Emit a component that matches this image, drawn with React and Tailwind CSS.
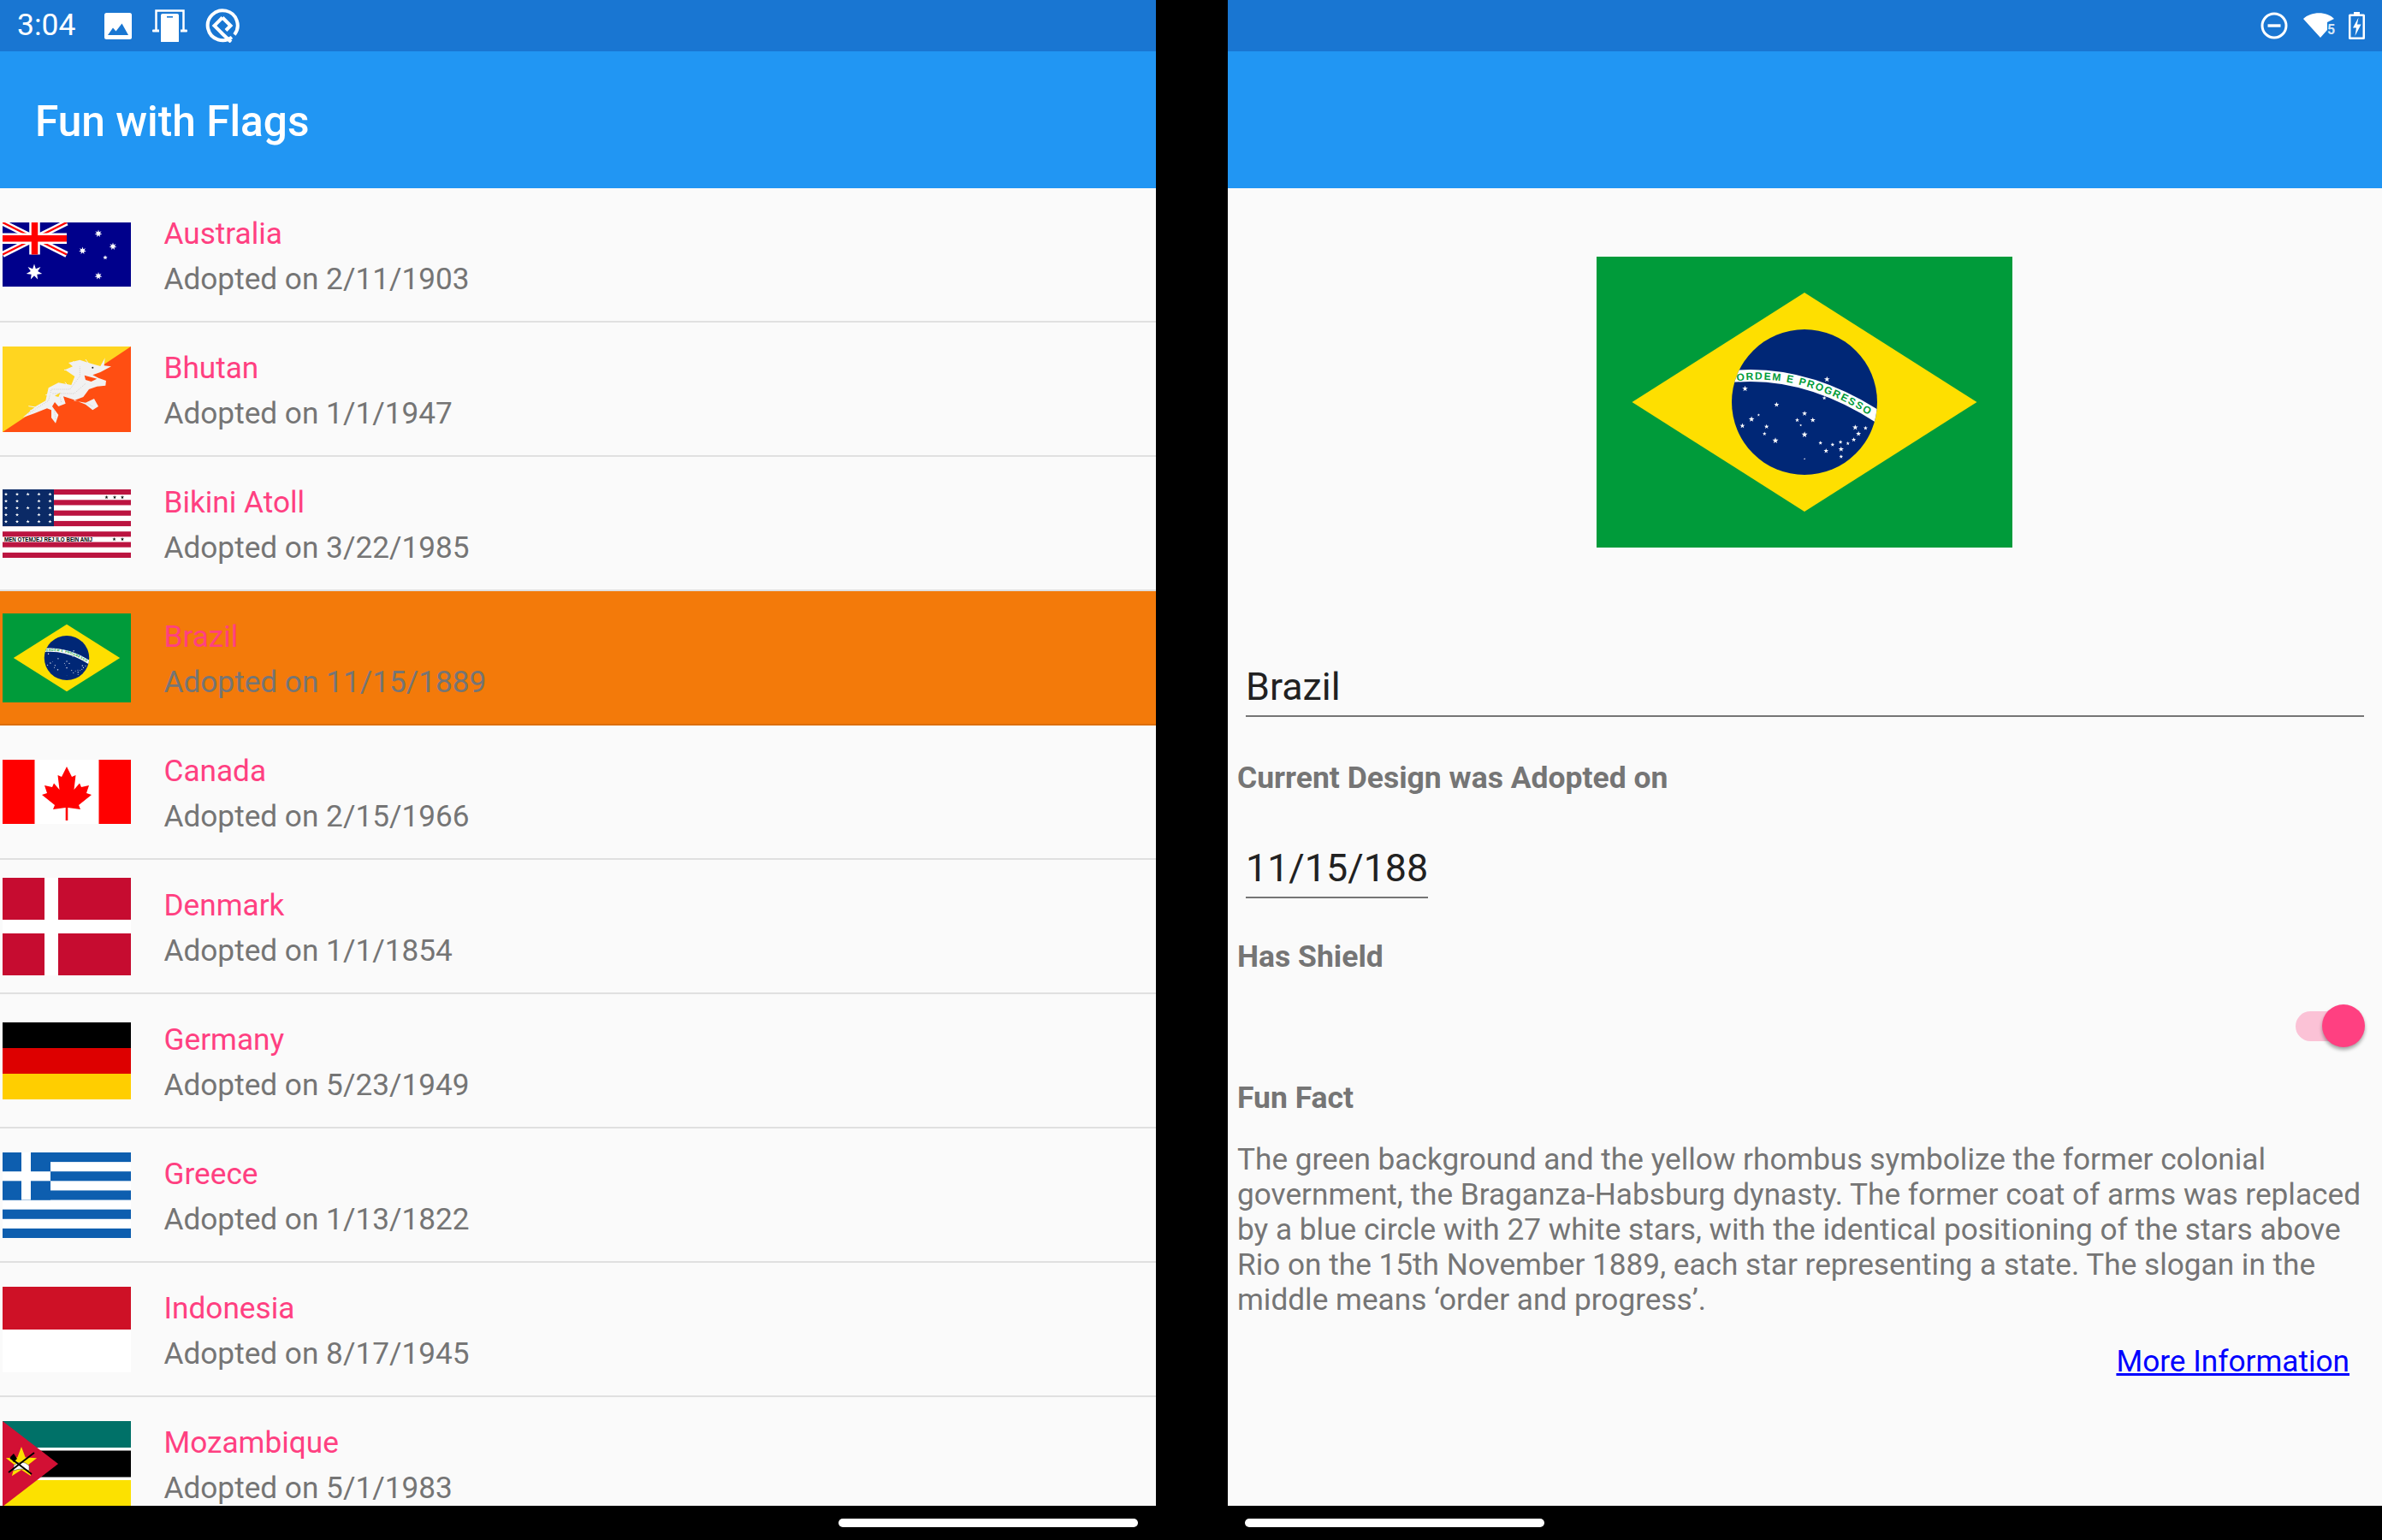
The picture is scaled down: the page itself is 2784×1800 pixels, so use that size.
import React from "react";

const countries = [
  { name: "Australia", date: "2/11/1903", Flag: AustraliaFlag, h: "h-[75px]" },
  { name: "Bhutan", date: "1/1/1947", Flag: BhutanFlag, h: "h-[100px]" },
  { name: "Bikini Atoll", date: "3/22/1985", Flag: BikiniFlag, h: "h-[80px]" },
  { name: "Brazil", date: "11/15/1889", Flag: BrazilFlag, h: "h-[104px]", selected: true },
  { name: "Canada", date: "2/15/1966", Flag: CanadaFlag, h: "h-[75px]" },
  { name: "Denmark", date: "1/1/1854", Flag: DenmarkFlag, h: "h-[114px]" },
  { name: "Germany", date: "5/23/1949", Flag: GermanyFlag, h: "h-[90px]" },
  { name: "Greece", date: "1/13/1822", Flag: GreeceFlag, h: "h-[100px]" },
  { name: "Indonesia", date: "8/17/1945", Flag: IndonesiaFlag, h: "h-[100px]" },
  { name: "Mozambique", date: "5/1/1983", Flag: MozambiqueFlag, h: "h-[100px]" },
];

// n-point star as polygon points
function starPoints(cx, cy, r, n = 5, inner = 0.4) {
  const pts = [];
  for (let i = 0; i < n * 2; i++) {
    const rad = i % 2 === 0 ? r : r * inner;
    const a = (Math.PI * i) / n - Math.PI / 2;
    pts.push(`${(cx + rad * Math.cos(a)).toFixed(2)},${(cy + rad * Math.sin(a)).toFixed(2)}`);
  }
  return pts.join(" ");
}

function FlagSvg({ w, h, children }) {
  return (
    <svg viewBox={`0 0 ${w} ${h}`} preserveAspectRatio="none" className="block w-full h-full">
      {children}
    </svg>
  );
}

function AustraliaFlag() {
  const stars = [
    [112, 13, 4.5, 7],
    [129, 28, 4.5, 7],
    [93.5, 33, 4.5, 7],
    [120, 41, 2.8, 5],
    [112, 62.5, 4.5, 7],
    [37, 58, 9.5, 7],
  ];
  return (
    <FlagSvg w={150} h={75}>
      <rect width="150" height="75" fill="#00008b" />
      <path d="M0 0L75 37.5M75 0L0 37.5" stroke="#fff" strokeWidth="7" />
      <path d="M0 0L75 37.5M75 0L0 37.5" stroke="#f00" strokeWidth="2.4" />
      <path d="M37.5 0V37.5M0 18.75H75" stroke="#fff" strokeWidth="12.5" />
      <path d="M37.5 0V37.5M0 18.75H75" stroke="#f00" strokeWidth="7.5" />
      {stars.map(([x, y, r, n]) => (
        <polygon key={`${x}-${y}`} points={starPoints(x, y, r, n, 0.45)} fill="#fff" />
      ))}
    </FlagSvg>
  );
}

function BhutanFlag() {
  return (
    <FlagSvg w={150} h={100}>
      <rect width="150" height="100" fill="#ffd520" />
      <polygon points="150,0 150,100 0,100" fill="#ff4e12" />
      <g transform="translate(-3,-5) scale(0.3333)">
        <polygon
          fill="#f1f1f1"
          points="80,264 125,225 160,205 170,160 205,142 250,150 262,120 228,97 255,85 240,72 280,62 320,75 352,84 368,55 365,82 390,85 352,105 325,115 345,125 372,135 370,152 340,155 312,165 292,192 258,205 300,212 330,198 345,225 325,238 300,218 255,200 222,190 230,215 205,225 192,210 183,225 205,255 195,284 180,265 180,238 165,232 120,250"
        />
        <polygon fill="#ff4e12" points="296,116 340,128 320,138 300,132" />
        <circle cx="325" cy="89" r="3" fill="#222" />
        <polygon fill="#ffd520" points="192,188 212,176 205,192" />
        <g fill="none" stroke="#bdbdbd" strokeWidth="2" strokeDasharray="3 4">
          <path d="M100 250L170 205L180 165L245 165L280 120L280 85" />
          <path d="M185 180L260 180L300 145" />
          <path d="M215 210L210 190M325 225L300 210M195 270L190 235" />
        </g>
        <g fill="none" stroke="#f1f1f1" strokeWidth="3">
          <path d="M100 224L125 228M105 240L130 232M225 97L262 100M255 68L280 78M300 60L315 80M160 185L180 180M228 140L240 155" />
        </g>
      </g>
    </FlagSvg>
  );
}

function BikiniFlag() {
  const s = 80 / 13;
  const cols = [4, 17, 29.6, 42.5, 55.5];
  const rows = [
    [0, 1, 2, 3, 4],
    [0, 1, 3, 4],
    [0, 1, 2, 3, 4],
    [0, 1, 3, 4],
    [0, 1, 2, 3, 4],
  ];
  return (
    <FlagSvg w={150} h={80}>
      <rect width="150" height="80" fill="#fff" />
      {[0, 2, 4, 6, 8, 10, 12].map((i) => (
        <rect key={i} y={i * s} width="150" height={s} fill="#bb1440" />
      ))}
      <rect width="60" height={7 * s} fill="#0b2a66" />
      {rows.map((row, r) =>
        row.map((c) => <polygon key={`${r}-${c}`} points={starPoints(cols[c], 5.7 + r * 8, 2.2)} fill="#fff" />)
      )}
      {[121.5, 131, 140].map((x) => (
        <polygon key={x} points={starPoints(x, 9.3, 2.2)} fill="#111" />
      ))}
      {[130.5, 140].map((x) => (
        <polygon key={x} points={starPoints(x, 58.3, 2.2)} fill="#111" />
      ))}
      <text x="2" y="60.8" fontSize="6.4" fontWeight="700" fontFamily="Liberation Sans, sans-serif" textLength="103" lengthAdjust="spacingAndGlyphs">
        MEN OTEMJEJ REJ ILO BEIN ANIJ
      </text>
    </FlagSvg>
  );
}

function BrazilFlag() {
  // star positions read off the large flag
  const stars = [
    [857, 490, 9],
    [579, 523, 9],
    [848, 556, 6],
    [686, 579, 8],
    [781, 610, 8],
    [625, 615, 4],
    [601, 630, 9],
    [756, 633, 6.5],
    [809, 633, 8],
    [570, 653, 8],
    [652, 656, 7.5],
    [768, 651, 3.5],
    [953, 659, 9],
    [988, 661, 6.5],
    [964, 681, 8],
    [645, 681, 6],
    [781, 684, 9.5],
    [682, 705, 9.5],
    [948, 702, 7],
    [835, 713, 6],
    [876, 719, 6],
    [903, 710, 6],
    [928, 715, 5.5],
    [905, 735, 8.5],
    [854, 741, 7.5],
    [905, 761, 6],
    [781, 769, 2.5],
  ];
  return (
    <FlagSvg w={486} h={340}>
      <defs>
        <clipPath id="brazilGlobe">
          <circle cx="243" cy="170" r="85" />
        </clipPath>
      </defs>
      <rect width="486" height="340" fill="#009b3a" />
      <polygon points="41.5,170 243,42 444.5,170 243,298" fill="#fedf00" />
      <circle cx="243" cy="170" r="85" fill="#002776" />
      <g clipPath="url(#brazilGlobe)">
        <path d="M150 141Q242 129 335 191" fill="none" stroke="#fff" strokeWidth="14" />
      </g>
      <path id="brazilBand" d="M164 145.5Q242 134 330 193" fill="none" />
      <text fontSize="12" fontWeight="700" fill="#009b3a" fontFamily="Liberation Sans, sans-serif" letterSpacing="1.6">
        <textPath href="#brazilBand">ORDEM E PROGRESSO</textPath>
      </text>
      {stars.map(([x, y, r]) => (
        <polygon key={`${x}-${y}`} points={starPoints((x - 75) / 2.904, (y - 60) / 3, r / 2.904 + 0.4)} fill="#fff" />
      ))}
    </FlagSvg>
  );
}

function CanadaFlag() {
  const half = [
    [6, 20],
    [10.5, 18],
    [8.5, 35],
    [15, 27.5],
    [17, 32],
    [26, 30],
    [23, 39],
    [29, 41],
    [14, 53],
    [16, 58],
    [1.3, 56],
    [1.3, 71],
  ];
  const right = half.map(([dx, y]) => `${75 + dx},${y}`);
  const left = [...half].reverse().map(([dx, y]) => `${75 - dx},${y}`);
  return (
    <FlagSvg w={150} h={75}>
      <rect width="150" height="75" fill="#fff" />
      <rect width="37.5" height="75" fill="#f00" />
      <rect x="112.5" width="37.5" height="75" fill="#f00" />
      <polygon points={["75,8", ...right, ...left].join(" ")} fill="#f00" />
    </FlagSvg>
  );
}

function DenmarkFlag() {
  return (
    <FlagSvg w={150} h={114}>
      <rect width="150" height="114" fill="#c60c30" />
      <rect x="49" width="16" height="114" fill="#fff" />
      <rect y="49" width="150" height="16" fill="#fff" />
    </FlagSvg>
  );
}

function GermanyFlag() {
  return (
    <FlagSvg w={150} h={90}>
      <rect width="150" height="30" fill="#000" />
      <rect y="30" width="150" height="30" fill="#d00" />
      <rect y="60" width="150" height="30" fill="#ffce00" />
    </FlagSvg>
  );
}

function GreeceFlag() {
  const s = 100 / 9;
  return (
    <FlagSvg w={150} h={100}>
      <rect width="150" height="100" fill="#fff" />
      {[0, 2, 4, 6, 8].map((i) => (
        <rect key={i} y={i * s} width="150" height={s} fill="#0d5eaf" />
      ))}
      <rect width="56" height={5 * s} fill="#0d5eaf" />
      <rect x="22" width="11" height={5 * s} fill="#fff" />
      <rect y={2 * s} width="56" height={s} fill="#fff" />
    </FlagSvg>
  );
}

function IndonesiaFlag() {
  return (
    <FlagSvg w={150} h={100}>
      <rect width="150" height="100" fill="#fff" />
      <rect width="150" height="50" fill="#ce1126" />
    </FlagSvg>
  );
}

function MozambiqueFlag() {
  return (
    <FlagSvg w={150} h={100}>
      <rect width="150" height="100" fill="#fff" />
      <rect width="150" height="31" fill="#007168" />
      <rect y="34.5" width="150" height="31" fill="#000" />
      <rect y="69" width="150" height="31" fill="#fce100" />
      <polygon points="0,0 65,50 0,100" fill="#d21034" />
      <polygon points={starPoints(22, 49, 19, 5, 0.42)} fill="#fce100" />
      <path d="M13 52Q22 44 31 52L31 58Q22 54 13 58Z" fill="#fff" stroke="#333" strokeWidth="0.5" />
      <path d="M7 60L37 37M9 43L34 62" stroke="#000" strokeWidth="2" />
      <path d="M9 42L13 38L17 44L13 48Z" fill="#000" />
    </FlagSvg>
  );
}

function StatusLeftIcons() {
  return (
    <>
      <svg viewBox="0 0 32 31" className="w-[32px] h-[31px] ml-[33px]">
        <rect width="32" height="31" rx="2.5" fill="#fff" />
        <path d="M4 26L10 17.5L13.5 21.5L20.5 12.5L28 26Z" fill="#1976d2" />
      </svg>
      <svg viewBox="0 0 41 38" className="w-[41px] h-[38px] ml-[24px]">
        <path d="M4.5 25V1.5H36.5V25" fill="none" stroke="#fff" strokeWidth="2.5" />
        <rect y="23.5" width="41" height="3" rx="1" fill="#fff" />
        <rect x="9" y="4" width="23" height="36" rx="3" fill="#fff" stroke="#1976d2" strokeWidth="2" />
        <rect x="17" y="8" width="7" height="1.6" fill="#1976d2" />
      </svg>
      <svg viewBox="0 0 40 40" className="w-[40px] h-[40px] ml-[21px]">
        <path d="M31 33.5A17.5 17.5 0 1 1 34 30.5" fill="none" stroke="#fff" strokeWidth="4" />
        <path d="M20 10.5L10.5 20L20 29.5L30 39" fill="none" stroke="#fff" strokeWidth="4" />
        <path d="M20 10.5L29.5 20L24 25.5" fill="none" stroke="#fff" strokeWidth="4" />
      </svg>
    </>
  );
}

function StatusRightIcons() {
  return (
    <>
      <svg viewBox="0 0 32 32" className="w-[32px] h-[32px]">
        <circle cx="16" cy="16" r="14" fill="none" stroke="#fff" strokeWidth="3" />
        <rect x="8.5" y="14.3" width="15" height="3.4" fill="#fff" />
      </svg>
      <svg viewBox="0 0 38 30" className="w-[38px] h-[30px] ml-[18px]">
        <path d="M0 7C9 -2 28 -2 36 7L28 11V20L20 29Z" fill="#fff" />
        <text x="28" y="25" fontSize="16" fontWeight="700" fill="#d5e6f7" fontFamily="Roboto, sans-serif">
          5
        </text>
      </svg>
      <svg viewBox="0 0 19 32" className="w-[19px] h-[32px] ml-[15px]">
        <path d="M6 0H13V2.5H17.5Q19 2.5 19 4V30.5Q19 32 17.5 32H1.5Q0 32 0 30.5V4Q0 2.5 1.5 2.5H6Z" fill="#fff" />
        <rect x="2.5" y="5" width="14" height="24.5" fill="#1976d2" />
        <path d="M11.5 6.5L5 18.5H9L7.5 28L14.5 14.5H10Z" fill="#fff" />
      </svg>
    </>
  );
}

function FlagRow({ country }) {
  const { name, date, Flag, h, selected } = country;
  return (
    <div
      className={`flex items-center h-[157px] shrink-0 border-b-2 pl-[3px] ${
        selected ? "bg-[#f37a0a] border-[#dc6e09]" : "border-[#e0e0e0]"
      }`}
    >
      <div className={`w-[150px] shrink-0 ${h}`}>
        <Flag />
      </div>
      <div className="ml-[38.5px] pt-[4px]">
        <div className="text-[35.2px] leading-[53px] text-[#ff4081]">{name}</div>
        <div className="text-[35.2px] leading-[53px] text-[#757575]">Adopted on {date}</div>
      </div>
    </div>
  );
}

function Label({ children, className }) {
  return <div className={`ml-[11px] text-[35.5px] leading-[41px] font-bold text-[#757575] ${className}`}>{children}</div>;
}

function DetailPane() {
  return (
    <div className="flex-1 flex flex-col pt-[80px]">
      <div className="ml-[431px] w-[486px] h-[340px]">
        <BrazilFlag />
      </div>

      <div className="mt-[137px] mx-[21px] pb-[7px] border-b-2 border-[#757575] text-[44.8px] leading-[52px] text-[#212121]">
        Brazil
      </div>

      <Label className="mt-[51px]">Current Design was Adopted on</Label>
      <div className="mt-[59px] ml-[21px] w-[213px] pb-[7px] border-b-2 border-[#757575] text-[44.8px] leading-[52px] text-[#212121] overflow-hidden whitespace-nowrap">
        11/15/188
      </div>

      <Label className="mt-[48px]">Has Shield</Label>
      <div className="mt-[35px] mr-[20px] flex items-center justify-end">
        <div className="w-[77px] h-[35px] rounded-full bg-[#fbc2d6]" />
        <div className="w-[50px] h-[50px] -ml-[46px] rounded-full bg-[#ff4081] shadow-[0_3px_4px_rgba(0,0,0,0.35)]" />
      </div>

      <Label className="mt-[39px]">Fun Fact</Label>
      <p className="mt-[31px] ml-[11px] mr-[6px] text-[35.2px] leading-[41px] text-[#757575]">
        The green background and the yellow rhombus symbolize the former colonial government, the Braganza-Habsburg
        dynasty. The former coat of arms was replaced by a blue circle with 27 white stars, with the identical
        positioning of the stars above Rio on the 15th November 1889, each star representing a state. The slogan in the
        middle means ‘order and progress’.
      </p>
      <div className="mt-[31px] mr-[38px] text-right">
        <a className="text-[35.2px] leading-[41px] text-[#0000ff] underline">More Information</a>
      </div>
    </div>
  );
}

export default function App() {
  return (
    <div className="w-[2784px] h-[1800px] bg-black flex flex-col font-[Roboto,sans-serif] overflow-hidden">
      <div className="flex h-[1760px] gap-[84px]">
        <div className="w-[1351px] flex flex-col bg-[#fafafa] overflow-hidden">
          <div className="h-[60px] shrink-0 bg-[#1976d2] flex items-center pl-[20px] text-white">
            <span className="text-[35.5px] w-[69px]">3:04</span>
            <StatusLeftIcons />
          </div>
          <div className="h-[160px] shrink-0 bg-[#2196f3] flex items-center pl-[41px] pt-[5px] text-[49.6px] font-medium text-white">
            Fun with Flags
          </div>
          {countries.map((c) => (
            <FlagRow key={c.name} country={c} />
          ))}
        </div>

        <div className="flex-1 flex flex-col bg-[#fafafa] overflow-hidden">
          <div className="h-[60px] shrink-0 bg-[#1976d2] flex items-center justify-end pr-[20px]">
            <StatusRightIcons />
          </div>
          <div className="h-[160px] shrink-0 bg-[#2196f3]" />
          <DetailPane />
        </div>
      </div>

      <div className="h-[40px] flex items-center pl-[980px] gap-[125px]">
        <div className="w-[350px] h-[10px] rounded-full bg-white" />
        <div className="w-[350px] h-[10px] rounded-full bg-white" />
      </div>
    </div>
  );
}
